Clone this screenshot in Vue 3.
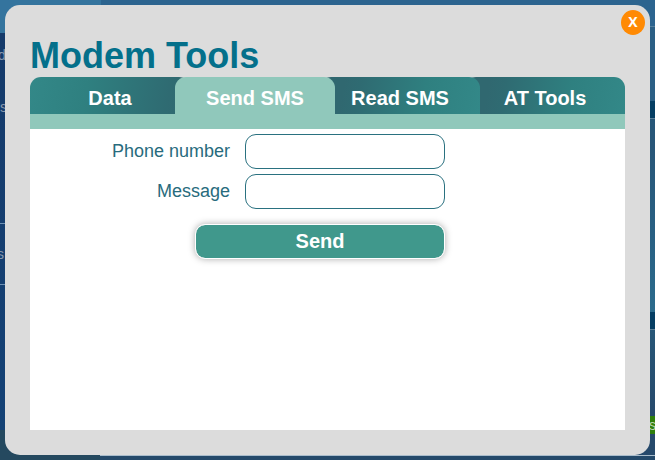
<script setup>
import { ref } from 'vue'

const tabs = ['Data', 'Send SMS', 'Read SMS', 'AT Tools']
const active = ref(1)
const phone = ref('')
const message = ref('')
</script>

<template>
  <div class="screen">
    <div class="backdrop">
      <div class="sky"></div>
      <div class="sky-left"></div>
      <div class="side-left"></div>
      <div class="side-right"></div>
      <div class="floor"></div>
      <div class="floor-left"></div>
      <div class="rule rule-a"></div>
      <div class="rule rule-b"></div>
      <div class="band band-a"></div>
      <div class="band band-b"></div>
      <span class="peek peek-a">d</span>
      <span class="peek peek-b">s</span>
      <span class="peek peek-c">s</span>
      <span class="badge">s</span>
    </div>

    <section class="dialog">
      <button class="close" type="button">X</button>
      <h1>Modem Tools</h1>
      <nav class="tabs">
        <button
          v-for="(tab, i) in tabs"
          :key="tab"
          type="button"
          class="tab"
          :class="['tab-' + i, { active: active === i }]"
          @click="active = i"
        >{{ tab }}</button>
      </nav>
      <form class="panel" @submit.prevent>
        <label class="row"><span>Phone number</span><input v-model="phone" type="text" /></label>
        <label class="row"><span>Message</span><input v-model="message" type="text" /></label>
        <button class="send" type="submit">Send</button>
      </form>
    </section>
  </div>
</template>

<style>
body {
  margin: 0;
  overflow: hidden;
}
</style>

<style scoped>
.screen {
  position: relative;
  box-sizing: border-box;
  width: 655px;
  height: 460px;
  padding: 5px;
  overflow: hidden;
  font-family: "Liberation Sans", Arial, sans-serif;
}
.backdrop,
.backdrop > * {
  position: absolute;
}
.backdrop {
  inset: 0;
  background: #2b6189;
}
.sky { left: 0; top: 0; width: 655px; height: 33px; background: #2c648f; }
.sky-left { left: 0; top: 0; width: 101px; height: 33px; background: #34749e; }
.side-left { left: 0; top: 33px; width: 20px; height: 397px; background: linear-gradient(#153a6a, #144276); }
.side-right {
  right: 0; top: 26px; width: 20px; height: 434px;
  background: linear-gradient(#2b5f85 0 75px, #265678 92px, #285678 120px, #286083 210px, #2b6b8c 285px, #275677 304px, #26496b 390px, #26496b);
  border-top: 1px solid #56819f;
  box-sizing: border-box;
}
.floor { left: 0; top: 455px; width: 655px; height: 5px; box-sizing: border-box; background: #24496a; border-top: 1px solid #a9bccb; }
.floor-left { left: 0; top: 430px; width: 100px; height: 30px; background: #25495f; }
.rule { height: 1px; background: #6e91b4; }
.rule-a { left: 0; top: 223px; width: 6px; }
.rule-b { left: 0; top: 284px; width: 6px; }
.band { left: 645px; width: 10px; box-sizing: border-box; background: #053e63; border-bottom: 1px solid #5d8199; }
.band-a { top: 101px; height: 18px; }
.band-b { top: 312px; height: 18px; }
.peek { color: #8798ae; font-size: 14px; line-height: 16px; }
.peek-a { left: -2px; top: 47px; }
.peek-b { left: 0; top: 99px; }
.peek-c { left: -3px; top: 246px; }
.badge {
  left: 640px; top: 416px; width: 15px; height: 18px;
  padding-left: 9px; box-sizing: border-box; overflow: hidden;
  background: #2f7f0c; color: #b9d2b0; font-size: 14px; line-height: 18px;
}

.dialog {
  position: relative;
  box-sizing: border-box;
  width: 645px;
  height: 450px;
  padding: 25px;
  border-radius: 15px;
  background: #dcdcdc;
}
h1 {
  margin: 0;
  height: 47px;
  color: #04708b;
  font-size: 36px;
  line-height: 52px;
  font-weight: bold;
  white-space: nowrap;
}
button {
  margin: 0;
  padding: 0;
  border: 0;
  font-family: inherit;
  font-weight: bold;
  color: #fff;
}
.close {
  position: absolute;
  right: 5px;
  top: 5px;
  width: 24px;
  height: 25px;
  padding-bottom: 2px;
  border-radius: 50%;
  background: #ff8a04;
  font-family: "Open Sans", sans-serif;
  font-size: 14px;
  line-height: 23px;
}
.tabs {
  display: flex;
  height: 52px;
  box-sizing: border-box;
  border-bottom: 15px solid #90c8bb;
}
.tab {
  position: relative;
  flex: none;
  width: 160px;
  height: 37px;
  padding-top: 6px;
  border-radius: 11px 11px 0 0;
  background: linear-gradient(100deg, #306870 15%, #2f6b72 25%, #2f8080 65%, #338888);
  font-size: 20px;
}
.tab + .tab { margin-left: -15px; }
.tab-0 {
  z-index: 3;
  background: linear-gradient(100deg, #338888, #2f8080 35%, #2f6b72 85%, #306870);
}
.tab-2 { z-index: 2; }
.tab-3 { z-index: 1; }
.tab.active {
  z-index: 4;
  background: #90c8bb;
}
.panel {
  display: flex;
  flex-direction: column;
  gap: 5px;
  box-sizing: border-box;
  height: 301px;
  padding-top: 5px;
  background: #fff;
}
.row {
  display: flex;
  height: 35px;
  gap: 15px;
  color: #286b7d;
  font-size: 18px;
  line-height: 34px;
}
.row span {
  width: 200px;
  text-align: right;
}
input {
  box-sizing: border-box;
  width: 200px;
  height: 35px;
  margin: 0;
  padding: 0 10px;
  border: 1px solid #2a7180;
  border-radius: 11px;
  background: #fff;
  outline: 0;
  color: #286b7d;
  font: inherit;
}
.send {
  width: 250px;
  height: 35px;
  margin: 10px 0 0 165px;
  border: 1px solid #fff;
  border-radius: 10px;
  background: #40988c;
  background-clip: padding-box;
  box-shadow: 0 0 7px #aaa;
  font-size: 20px;
}
</style>
